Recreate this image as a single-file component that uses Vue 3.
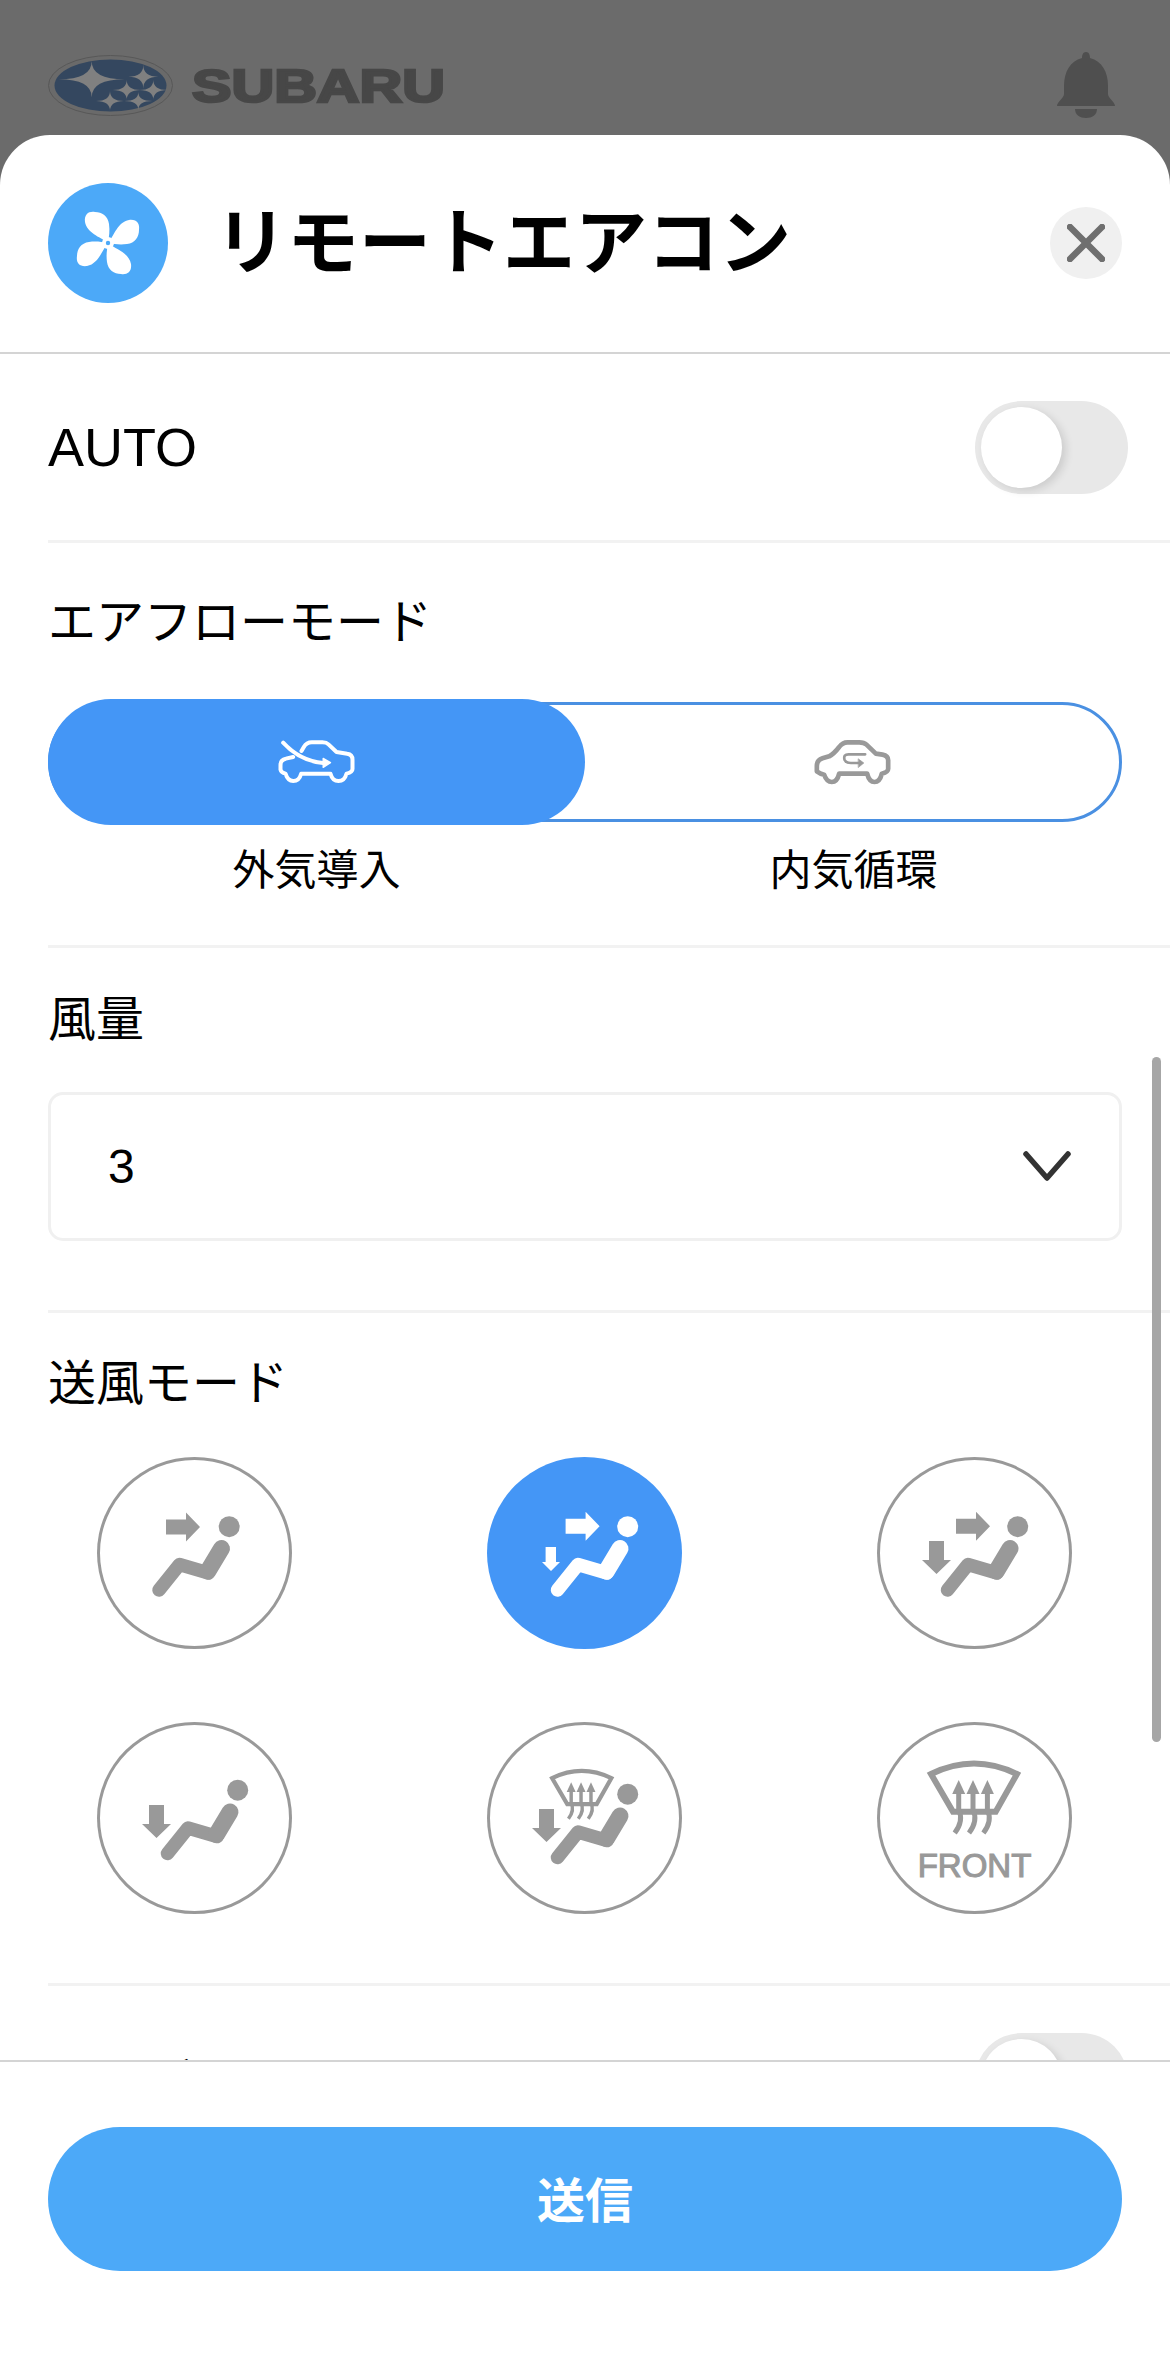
<template>
  <div class="page">
    <div class="topbar">
      <svg class="logo" width="400" height="64" viewBox="0 0 400 64">
        <ellipse cx="62.5" cy="32.5" rx="62" ry="30" fill="#6a6a6a" stroke="#585858" stroke-width="1" />
        <ellipse cx="62.5" cy="32.5" rx="56" ry="26" fill="#34475f" />
        <path v-for="s in stars" :key="s.x" :d="starPath(s)" fill="#808080" />
        <text x="144" y="49" class="logo-word" textLength="253" lengthAdjust="spacingAndGlyphs">SUBARU</text>
      </svg>
      <svg class="bell" width="58" height="66" viewBox="0 0 58 66">
        <path d="M29 0C26 0 25 3 25 6C13 9 7 20 7 34L7 42C7 46 0 50 0 54L58 54C58 50 51 46 51 42L51 34C51 20 45 9 33 6C33 3 32 0 29 0Z" fill="#4f4f4f" />
        <path d="M18 57L40 57C40 63 35 66 29 66C23 66 18 63 18 57Z" fill="#4f4f4f" />
      </svg>
    </div>

    <div class="sheet">
      <div class="sheet-head">
        <div class="fan">
          <svg width="120" height="120" viewBox="0 0 120 120">
            <path
              v-for="r in [0, 90, 180, 270]"
              :key="r"
              d="M59 59C52 54 39 50 37 39C36 31 41 28 47 29C54 29 60 33 61 41C62 48 61 54 60 59Z"
              fill="#fff"
              :transform="`rotate(${r} 60 60)`"
            />
            <circle cx="60" cy="60" r="6" fill="#fff" />
            <circle cx="60" cy="60" r="2.2" fill="#4ca9f8" />
          </svg>
        </div>
        <h1 class="title">リモートエアコン</h1>
        <button class="close">
          <svg width="38" height="38" viewBox="0 0 38 38">
            <path d="M3 3L35 35M35 3L3 35" stroke="#6f6f6f" stroke-width="6.5" stroke-linecap="round" />
          </svg>
        </button>
      </div>

      <div class="scroll">
        <div class="row">
          <span class="row-label">AUTO</span>
          <span class="toggle"><span class="knob"></span></span>
        </div>

        <div class="section airflow">
          <div class="heading">エアフローモード</div>
          <div class="segment">
            <div class="seg-item on">
              <svg width="87" height="50" viewBox="100 140 260 150" fill="none" stroke="#fff" stroke-width="12" stroke-linecap="round" stroke-linejoin="round">
                <path d="M160 200L138 205Q122 208 122 224L122 238Q124 247 137 250Q144 272 160 272Q178 272 184 250L272 250Q278 272 296 272Q314 272 320 250Q338 246 338 236L338 208Q338 192 322 190L290 185L266 162Q260 156 248 156L216 156Q200 156 192 170L185 182" />
                <path d="M130 157Q180 212 250 218" />
                <path d="M250 204L272 217L250 231Z" fill="#fff" stroke-width="4" />
              </svg>
            </div>
            <div class="seg-item">
              <svg width="87" height="50" viewBox="90 135 260 150" fill="none" stroke="#999" stroke-width="14" stroke-linecap="round" stroke-linejoin="round">
                <path d="M150 193L130 199Q113 204 113 222L113 238Q122 245 135 248Q142 270 158 270Q174 270 180 245L264 245Q270 270 286 270Q302 270 308 245Q327 240 327 230L327 205Q327 191 310 188L290 185L262 158Q255 151 240 151L205 151Q190 151 180 165Q165 185 150 193Z" />
                <path d="M258 187L208 187Q192 187 196 203Q200 213 215 213L240 213" stroke-width="8" />
                <path d="M238 201L254 213L238 226Z" fill="#999" stroke-width="2" />
              </svg>
            </div>
          </div>
          <div class="seg-labels">
            <span>外気導入</span>
            <span>内気循環</span>
          </div>
        </div>

        <div class="section wind">
          <div class="heading">風量</div>
          <div class="select">
            <span>3</span>
            <svg width="48" height="31" viewBox="0 0 48 31">
              <path d="M3 3L24 27L45 3" fill="none" stroke="#333" stroke-width="5.5" stroke-linecap="round" stroke-linejoin="round" />
            </svg>
          </div>
        </div>

        <div class="section blow">
          <div class="heading">送風モード</div>
          <div class="modes">
            <div v-for="m in modes" :key="m.id" class="mode" :class="{ on: m.active }">
              <svg width="195" height="192" viewBox="0 0 195 192">
                <polygon v-if="m.right" :points="rightArrow(m.right)" fill="currentColor" />
                <polygon v-if="m.down" :points="m.down" fill="currentColor" />
                <g v-if="m.seat" :transform="`translate(${m.seat[0]} ${m.seat[1]})`">
                  <circle cx="140.7" cy="69.7" r="10.5" fill="currentColor" />
                  <path d="M70.5 133L91 107.5L120 116" fill="none" stroke="currentColor" stroke-width="13.5" stroke-linecap="round" stroke-linejoin="round" />
                  <path d="M119.5 114L133 91.5" fill="none" stroke="currentColor" stroke-width="17" stroke-linecap="round" />
                </g>
                <g v-if="m.shield" :transform="m.shield" fill="none" stroke="currentColor">
                  <path d="M54 52Q97 31 140 52L118.7 89.7L76 89.7Z" stroke-width="6" />
                  <g v-for="x in [81.7, 96, 110.4]" :key="x">
                    <polygon :points="`${x - 6.5},72 ${x},58 ${x + 6.5},72`" fill="currentColor" stroke="none" />
                    <path :d="`M${x} 70V88C${x + 4} 96 ${x + 2} 103 ${x - 4} 111`" stroke-width="5" />
                  </g>
                </g>
                <text v-if="m.label" x="97.5" y="155" class="mode-label" text-anchor="middle">{{ m.label }}</text>
              </svg>
            </div>
          </div>
        </div>

        <div class="row">
          <span class="row-label jp">リアデフォッガー</span>
          <span class="toggle"><span class="knob"></span></span>
        </div>

        <div class="scrollbar"></div>
      </div>

      <div class="footer">
        <button class="send">送信</button>
      </div>
    </div>
  </div>
</template>

<script setup>
const stars = [
  { x: 43.7, y: 26.3, rx: 33, ry: 18 },
  { x: 95.3, y: 23.7, rx: 15, ry: 12 },
  { x: 78.7, y: 37, rx: 14, ry: 10 },
  { x: 105.3, y: 37, rx: 14, ry: 10 },
  { x: 62, y: 48, rx: 14, ry: 10 },
  { x: 90.3, y: 48, rx: 14, ry: 9 },
]

function starPath({ x, y, rx, ry }) {
  return `M${x} ${y - ry}Q${x} ${y} ${x + rx} ${y}Q${x} ${y} ${x} ${y + ry}Q${x} ${y} ${x - rx} ${y}Q${x} ${y} ${x} ${y - ry}Z`
}

function rightArrow([x, y]) {
  return `${x},${y + 7} ${x + 20},${y + 7} ${x + 20},${y} ${x + 34},${y + 14.5} ${x + 20},${y + 29} ${x + 20},${y + 22} ${x},${y + 22}`
}

const bigDown = (dy) =>
  `52,${84 + dy} 67,${84 + dy} 67,${103 + dy} 74,${103 + dy} 59.5,${117 + dy} 45,${103 + dy} 52,${103 + dy}`

const modes = [
  { id: 1, right: [69, 55.5], seat: [-8.5, 0] },
  {
    id: 2,
    active: true,
    right: [78.6, 54.7],
    down: '58.6,90 69,90 69,105 73,105 64,114 55,105 58.6,105',
    seat: [0, 0],
  },
  { id: 3, right: [79, 54.7], down: bigDown(0), seat: [0, 0] },
  { id: 4, down: bigDown(-1), seat: [0, -1.5] },
  { id: 5, down: bigDown(3), seat: [0, 2.5], shield: 'translate(27.8 20.2) scale(0.69)' },
  { id: 6, shield: 'translate(0 0)', label: 'FRONT' },
]
</script>

<style>
html,
body {
  background: #fff;
}
</style>

<style scoped>
.page {
  width: 1170px;
  height: 2360px;
  display: flex;
  flex-direction: column;
  overflow: hidden;
  background: #6b6b6b;
  font-family: "Liberation Sans", "Noto Sans CJK JP", sans-serif;
  color: #000;
}

.topbar {
  height: 100px;
  padding: 35px 55px 0 48px;
  display: flex;
  align-items: center;
  justify-content: space-between;
  flex-shrink: 0;
}

.logo {
  display: block;
}

.logo-word {
  font-family: "Liberation Sans", sans-serif;
  font-weight: 700;
  font-size: 46px;
  fill: #474747;
  stroke: #474747;
  stroke-width: 2.5px;
}

.bell {
  display: block;
}

.sheet {
  flex: 1;
  min-height: 0;
  display: flex;
  flex-direction: column;
  background: #fff;
  border-radius: 50px 50px 0 0;
}

.sheet-head {
  display: flex;
  align-items: center;
  padding: 48px 48px 49px;
  border-bottom: 2px solid #d4d4d4;
  flex-shrink: 0;
}

.fan {
  width: 120px;
  height: 120px;
  border-radius: 50%;
  background: #4ca9f8;
}

.fan svg {
  display: block;
}

.title {
  margin: 0 0 0 47px;
  font-size: 72px;
  line-height: 100px;
  font-weight: 700;
}

.close {
  margin-left: auto;
  width: 72px;
  height: 72px;
  padding: 0;
  border: 0;
  border-radius: 50%;
  background: #f0f0f0;
  display: flex;
  align-items: center;
  justify-content: center;
}

.scroll {
  position: relative;
  flex: 1;
  min-height: 0;
  overflow: hidden;
}

.row {
  height: 189px;
  box-sizing: border-box;
  margin-left: 48px;
  padding: 0 42px 0 0;
  display: flex;
  align-items: center;
  justify-content: space-between;
  border-bottom: 3px solid #f2f2f2;
}

.row-label {
  font-size: 54px;
}

.row-label.jp {
  font-size: 48px;
  margin-top: -1px;
}

.toggle {
  position: relative;
  width: 153px;
  height: 93px;
  border-radius: 47px;
  background: #e8e8e8;
}

.knob {
  position: absolute;
  left: 6px;
  top: 6px;
  width: 81px;
  height: 81px;
  border-radius: 50%;
  background: #fff;
  box-shadow: 4px 3px 8px rgba(0, 0, 0, 0.12);
}

.section {
  margin-left: 48px;
  padding-right: 48px;
  border-bottom: 3px solid #f2f2f2;
}

.heading {
  font-size: 48px;
  line-height: 60px;
}

.airflow {
  padding-top: 50px;
  padding-bottom: 49px;
}

.segment {
  margin-top: 49px;
  height: 120px;
  box-sizing: border-box;
  display: flex;
  border: 3px solid #4a90e2;
  border-radius: 60px;
}

.seg-item {
  flex: 1;
  display: flex;
  align-items: center;
  justify-content: center;
}

.seg-item.on {
  flex: none;
  width: 537px;
  margin: -6px 0 -6px -3px;
  background: #4496f6;
  border-radius: 63px;
}

.seg-labels {
  margin-top: 24px;
  display: flex;
  font-size: 42px;
  line-height: 50px;
}

.seg-labels span {
  flex: 1;
  text-align: center;
}

.wind {
  padding-top: 42px;
  padding-bottom: 69px;
}

.select {
  margin-top: 42px;
  height: 149px;
  box-sizing: border-box;
  padding: 0 48px 0 57px;
  display: flex;
  align-items: center;
  justify-content: space-between;
  border: 3px solid #f0f0f0;
  border-radius: 15px;
  font-size: 48px;
}

.blow {
  padding-top: 41px;
  padding-bottom: 69px;
}

.modes {
  margin-top: 43px;
  padding: 0 50px 0 49px;
  display: grid;
  grid-template-columns: repeat(3, 195px);
  justify-content: space-between;
  row-gap: 73px;
}

.mode {
  width: 195px;
  height: 192px;
  border-radius: 50%;
  box-shadow: inset 0 0 0 3px #999;
  color: #999;
}

.mode svg {
  display: block;
}

.mode.on {
  background: #4496f6;
  box-shadow: none;
  color: #fff;
}

.mode-label {
  font-family: "Liberation Sans", sans-serif;
  font-size: 33px;
  fill: currentColor;
  stroke: currentColor;
  stroke-width: 1.1px;
}

.scrollbar {
  position: absolute;
  top: 703px;
  right: 9px;
  width: 9px;
  height: 685px;
  border-radius: 5px;
  background: #a6a6a6;
}

.footer {
  height: 300px;
  box-sizing: border-box;
  padding: 65px 48px 0;
  border-top: 2px solid #d4d4d4;
  flex-shrink: 0;
  background: #fff;
}

.send {
  display: block;
  width: 100%;
  height: 144px;
  padding: 0 0 5px;
  border: 0;
  border-radius: 72px;
  background: #4ca9f8;
  color: #fff;
  font-family: inherit;
  font-size: 48px;
  font-weight: 700;
}
</style>
